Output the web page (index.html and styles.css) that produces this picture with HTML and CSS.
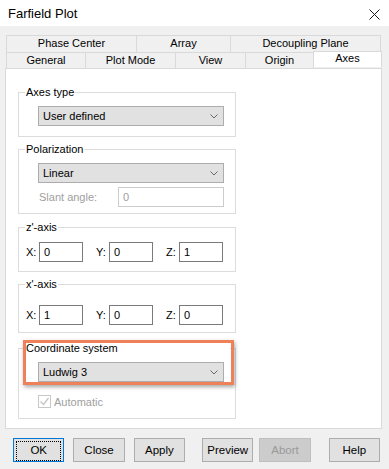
FILE: index.html
```html
<!DOCTYPE html>
<html lang="en">
<head>
  <meta charset="UTF-8">
  <title>Farfield Plot</title>
  <link rel="stylesheet" href="styles.css">
</head>
<body>
  <div class="titlebar">
    <span class="title">Farfield Plot</span>
    <svg class="close-x" width="11" height="11" viewBox="0 0 11 11">
      <path d="M0.5 0.5 L10.5 10.5 M10.5 0.5 L0.5 10.5" stroke="#1a1a1a" stroke-width="1" fill="none"/>
    </svg>
  </div>

  <div class="tabs">
    <div class="tab-row">
      <div class="tab w-phase">Phase Center</div>
      <div class="tab w-array">Array</div>
      <div class="tab w-decoup">Decoupling Plane</div>
    </div>
    <div class="tab-row">
      <div class="tab w-general">General</div>
      <div class="tab w-plotmode">Plot Mode</div>
      <div class="tab w-view">View</div>
      <div class="tab w-origin">Origin</div>
      <div class="tab w-axes selected">Axes</div>
    </div>
  </div>

  <div class="page">
    <div class="group g-axestype">
      <div class="legend">Axes type</div>
      <div class="select">
        <span>User defined</span>
        <svg width="8" height="5" viewBox="0 0 8 5"><path d="M0.5 0.5 L4 4 L7.5 0.5" stroke="#6a6a6a" fill="none"/></svg>
      </div>
    </div>

    <div class="group g-polar">
      <div class="legend">Polarization</div>
      <div class="select">
        <span>Linear</span>
        <svg width="8" height="5" viewBox="0 0 8 5"><path d="M0.5 0.5 L4 4 L7.5 0.5" stroke="#6a6a6a" fill="none"/></svg>
      </div>
      <div class="slant-row">
        <span class="disabled-text">Slant angle:</span>
        <div class="input disabled wide">0</div>
      </div>
    </div>

    <div class="group g-zaxis">
      <div class="legend">z'-axis</div>
      <div class="xyz-row">
        <span class="coord">X:</span><div class="input">0</div>
        <span class="coord">Y:</span><div class="input">0</div>
        <span class="coord">Z:</span><div class="input">1</div>
      </div>
    </div>

    <div class="group g-xaxis">
      <div class="legend">x'-axis</div>
      <div class="xyz-row">
        <span class="coord">X:</span><div class="input">1</div>
        <span class="coord">Y:</span><div class="input">0</div>
        <span class="coord">Z:</span><div class="input">0</div>
      </div>
    </div>

    <div class="group g-coord">
      <div class="legend">Coordinate system</div>
      <div class="select">
        <span>Ludwig 3</span>
        <svg width="8" height="5" viewBox="0 0 8 5"><path d="M0.5 0.5 L4 4 L7.5 0.5" stroke="#6a6a6a" fill="none"/></svg>
      </div>
      <div class="check-row">
        <span class="checkbox">
          <svg width="11" height="11" viewBox="0 0 11 11"><path d="M1.5 5.5 L4.5 8.5 L9.5 2" stroke="#c4c4c4" stroke-width="1.3" fill="none"/></svg>
        </span>
        <span class="disabled-text">Automatic</span>
      </div>
      <div class="highlight"></div>
    </div>
  </div>

  <div class="buttons">
    <button class="btn default"><span>OK</span></button>
    <button class="btn">Close</button>
    <button class="btn">Apply</button>
    <button class="btn wide-gap">Preview</button>
    <button class="btn narrow-gap" disabled>Abort</button>
    <button class="btn wider-gap">Help</button>
  </div>
</body>
</html>
```

FILE: styles.css
```css
body {
  margin: 0;
  width: 389px;
  height: 469px;
  background: #f0f0f0;
  font-family: "Liberation Sans", Arial, sans-serif;
  font-size: 11px;
  color: #000;
  overflow: hidden;
}

.titlebar {
  height: 26px;
  background: #fff;
  display: flex;
  align-items: center;
  justify-content: space-between;
  padding: 0 9px 0 8px;
}

.title {
  font-size: 13px;
  margin-top: 1px;
}

.close-x {
  margin-top: 2px;
}

/* tabs */
.tabs {
  margin: 9px 0 0 6px;
}

.tab-row {
  display: flex;
}

.tab {
  box-sizing: border-box;
  height: 17px;
  line-height: 15px;
  border: 1px solid #d9d9d9;
  border-bottom: none;
  margin-right: -1px;
  text-align: center;
  background: #f0f0f0;
}

.tab-row + .tab-row .tab {
  height: 16px;
}

.tab.selected {
  position: relative;
  z-index: 1;
  height: 18px;
  margin-top: -1px;
  line-height: 13px;
  background: #fff;
}

.w-phase { width: 131px; }
.w-array { width: 95px; }
.w-decoup { width: 151px; }
.w-general { width: 80px; }
.w-plotmode { width: 91px; }
.w-view { width: 71px; }
.w-origin { width: 69px; }
.w-axes { width: 69px; }

/* page */
.page {
  box-sizing: border-box;
  width: 377px;
  height: 361px;
  margin-left: 5px;
  background: #fff;
  border: 1px solid #d9d9d9;
  padding: 23px 0 0 12px;
}

.group {
  box-sizing: border-box;
  width: 218px;
  border: 1px solid #dcdcdc;
  padding: 0 11px 0 19px;
  position: relative;
}

.legend {
  width: fit-content;
  margin: -7px 0 0 -13px;
  padding: 0 1px;
  line-height: 13px;
  background: #fff;
}

/* the marked area covers the frame line behind the label */
.g-coord .legend {
  width: 203px;
}

.g-axestype { padding-bottom: 10px; }
.g-polar { margin-top: 12px; padding-bottom: 6px; }
.g-zaxis { margin-top: 13px; padding-bottom: 9px; }
.g-xaxis { margin-top: 12px; padding-bottom: 7px; }
.g-coord { margin-top: 15px; padding-bottom: 10px; }

.select {
  box-sizing: border-box;
  height: 20px;
  margin-top: 7px;
  background: #e1e1e1;
  border: 1px solid #adadad;
  display: flex;
  align-items: center;
  justify-content: space-between;
  padding: 0 5px 0 4px;
}

.slant-row {
  display: flex;
  align-items: center;
  justify-content: space-between;
  margin-top: 4px;
  padding-left: 1px;
}

.disabled-text {
  color: #a0a0a0;
}

.input {
  box-sizing: border-box;
  width: 44px;
  height: 20px;
  border: 1px solid #7a7a7a;
  background: #fff;
  line-height: 18px;
  padding-left: 4px;
}

.input.disabled {
  border-color: #cccccc;
  color: #a0a0a0;
}

.input.wide {
  width: 106px;
}

.xyz-row {
  display: flex;
  align-items: center;
  margin-left: -12px;
}

.g-zaxis .xyz-row { margin-top: 8px; }
.g-xaxis .xyz-row { margin-top: 14px; }

.coord {
  width: 13px;
}

.xyz-row .input + .coord {
  margin-left: 13px;
}

.check-row {
  display: flex;
  align-items: center;
  margin-top: 13px;
  height: 13px;
}

.checkbox {
  box-sizing: border-box;
  width: 13px;
  height: 13px;
  border: 1px solid #c8c8c8;
  display: flex;
  align-items: center;
  justify-content: center;
  margin-right: 3px;
}

.highlight {
  position: absolute;
  box-sizing: border-box;
  top: -9px;
  left: 4px;
  width: 211px;
  height: 45px;
  border: 3px solid #ee8159;
  box-shadow: 1px 2px 4px rgba(0, 0, 0, 0.35);
}

/* buttons */
.buttons {
  display: flex;
  margin: 9px 0 0 13px;
}

.btn {
  box-sizing: border-box;
  width: 52px;
  height: 24px;
  margin: 0 9px 0 0;
  padding: 0;
  background: #e1e1e1;
  border: 1px solid #adadad;
  font-family: "Liberation Sans", Arial, sans-serif;
  font-size: 11.5px;
  color: #000;
}

.btn.default {
  border: 1px solid #0078d7;
  padding: 2px;
}

.btn.default span {
  display: block;
  height: 100%;
  line-height: 16px;
  border: 1px dotted #000;
}

.btn:disabled {
  background: #cccccc;
  border-color: #bfbfbf;
  color: #9a9a9a;
}

.wide-gap { margin-left: 8px; }
.narrow-gap { margin-left: -3px; }
.wider-gap { margin-left: 9px; }
```
